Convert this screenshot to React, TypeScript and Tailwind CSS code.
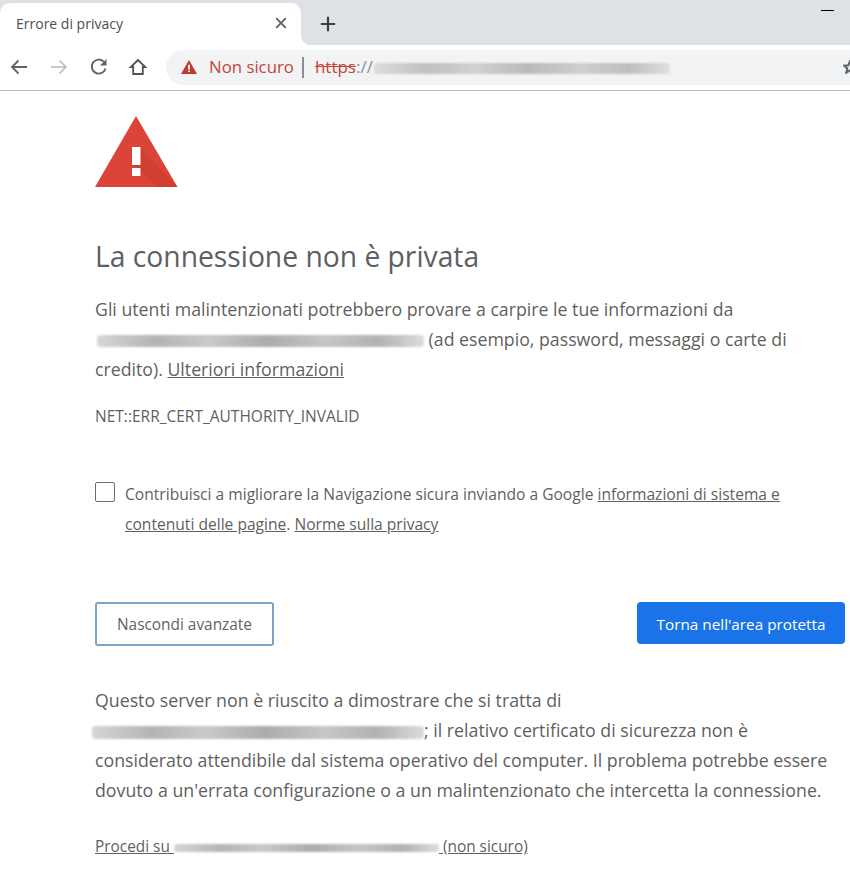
const bodyFont = { fontFamily: '"Open Sans", "Noto Sans", sans-serif' };

function Smudge({ className }: { className: string }) {
  return (
    <span
      className={`inline-block rounded-[3px] bg-[linear-gradient(90deg,#d6d6d6,#b4b4b4_18%,#c9c9c9_34%,#acacac_52%,#c6c6c6_70%,#b2b2b2_86%,#dcdcdc)] blur-[1px] align-middle ${className}`}
    />
  );
}

function TabBar() {
  return (
    <div className="relative flex h-[45px] items-start bg-[#dee1e6] pt-[3px]">
      <div className="relative flex h-[42px] w-[301px] items-center justify-between rounded-t-[10px] bg-white pb-[2px] pl-4 pr-[14px]">
        <span className="text-[14px] text-[#4b4f53]">Errore di privacy</span>
        <svg width="12" height="12" viewBox="0 0 12 12" className="text-[#5f6368]">
          <path d="M1.200 1.200 10.800 10.800M10.800 1.200 1.200 10.800" stroke="currentColor" strokeWidth="1.900" />
        </svg>
        <div className="absolute bottom-0 left-full h-[9px] w-[9px] bg-white">
          <div className="h-full w-full rounded-bl-[9px] bg-[#dee1e6]" />
        </div>
      </div>
      <svg width="16" height="16" viewBox="0 0 16 16" className="ml-[19px] mt-[13px] text-[#3c4043]">
        <path d="M8 .8v14.400M.8 8h14.400" stroke="currentColor" strokeWidth="2.200" />
      </svg>
      <div className="absolute right-[16px] top-[10px] h-px w-[13px] bg-black" />
    </div>
  );
}

function Toolbar() {
  return (
    <div className="flex h-[46px] items-center overflow-hidden border-b border-[#b9b9b9] bg-white pb-[1px]">
      <svg width="18" height="16" viewBox="0 0 18 16" className="ml-[10px] text-[#5f6368]">
        <path d="M17 8H2M8.500 1.500 2 8l6.500 6.500" fill="none" stroke="currentColor" strokeWidth="1.800" />
      </svg>
      <svg width="18" height="16" viewBox="0 0 18 16" className="ml-[22px] text-[#b9bcc0]">
        <path d="M1 8h15M9.500 1.500 16 8l-6.500 6.500" fill="none" stroke="currentColor" strokeWidth="1.600" />
      </svg>
      <svg width="18" height="18" viewBox="0 0 18 18" className="ml-[22px] text-[#5f6368]">
        <path d="M15.500 10.500A7 7 0 1 1 13.900 3.800" fill="none" stroke="currentColor" strokeWidth="1.900" />
        <path d="M16.500 1v6.500H10z" fill="currentColor" />
      </svg>
      <svg width="18" height="18" viewBox="0 0 18 18" className="ml-[21px] text-[#4f5357]">
        <path d="M9 2 1.800 9H4.200v7h9.600V9h2.400z" fill="none" stroke="currentColor" strokeWidth="1.800" strokeLinejoin="miter" />
      </svg>
      <div className="ml-[19px] flex h-[35px] min-w-0 flex-1 items-center rounded-l-full bg-[#f1f3f4] pl-[15px]">
        <svg width="16" height="14" viewBox="0 0 16 14" className="shrink-0">
          <path d="M8 0 16 14H0z" fill="#c5382c" />
          <path d="M7.100 4.800h1.800v4.600H7.100zM7.100 10.400h1.800v1.700H7.100z" fill="#fff" />
        </svg>
        <span className="ml-[12px] text-[16.800px] text-[#c5453a]">Non sicuro</span>
        <span className="ml-[8px] h-[21px] w-[2px] bg-[#8a8e92]" />
        <span className="ml-[11px] text-[17px] text-[#c5453a] line-through">https</span>
        <span className="text-[17px] text-[#8a8d90]">://</span>
        <Smudge className="ml-[1px] mt-[2px] h-[11px] w-[296px] opacity-80" />
        <svg width="14" height="14" viewBox="0 0 14 14" className="ml-auto mr-[-7px] shrink-0 text-[#5f6368]">
          <path d="M7 1.200 8.700 5.200 13 5.600 9.700 8.400 10.700 12.700 7 10.400 3.300 12.700 4.300 8.400 1 5.600 5.300 5.200z" fill="none" stroke="currentColor" strokeWidth="2" />
        </svg>
      </div>
    </div>
  );
}

function WarningIcon() {
  return (
    <svg width="83" height="71" viewBox="0 0 83 71" className="block">
      <path d="M41 0 82.500 71H0z" fill="#db4437" />
      <path d="M45 31 82.500 71H62L37 48z" fill="#c53929" opacity="0.5" />
      <path d="M37 31h8.500v18H37zM37 52h8.500v8H37z" fill="#fff" />
    </svg>
  );
}

export default function App() {
  return (
    <div className="h-[882px] w-[850px] overflow-hidden bg-white" style={bodyFont}>
      <TabBar />
      <Toolbar />
      <main className="pl-[95px] pr-[5px] text-[#5f5f5f]">
        <div className="pt-[25px]">
          <WarningIcon />
        </div>
        <h1 className="mt-[49px] text-[28.250px] leading-[40px] text-[#5c6064]">La connessione non è privata</h1>
        <p className="mt-[18px] w-[730px] text-[17.730px] leading-[30px]">
          Gli utenti malintenzionati potrebbero provare a carpire le tue informazioni da
          <br />
          <Smudge className="ml-[2px] h-[12px] w-[327px]" /> (ad esempio, password, messaggi o carte di
          <br />
          credito). <span className="underline">Ulteriori informazioni</span>
        </p>
        <p className="mt-[22px] text-[15.500px] leading-[20px]">NET::ERR_CERT_AUTHORITY_INVALID</p>

        <div className="mt-[53px] flex items-start">
          <span className="mt-[3px] block h-[20px] w-[20px] shrink-0 rounded-[2px] border border-[#6e6e6e]" />
          <p className="ml-[10px] text-[15.600px] leading-[30px]">
            Contribuisci a migliorare la Navigazione sicura inviando a Google{" "}
            <span className="underline">informazioni di sistema e</span>
            <br />
            <span className="underline">contenuti delle pagine</span>. <span className="underline">Norme sulla privacy</span>
          </p>
        </div>

        <div className="mt-[63px] flex items-start justify-between">
          <button className="h-[44px] w-[179px] rounded-[3px] border-2 border-[#7ea3c4] bg-white pt-[2px] text-[15.400px] text-[#5f6368]">
            Nascondi avanzate
          </button>
          <button className="h-[42px] w-[208px] rounded-[4px] bg-[#1a73e8] pt-[2px] text-[15.300px] font-medium text-white">
            Torna nell'area protetta
          </button>
        </div>

        <p className="mt-[39px] w-[745px] text-[17.750px] leading-[30px]">
          Questo server non è riuscito a dimostrare che si tratta di
          <br />
          <Smudge className="ml-[-3px] h-[13px] w-[332px]" />; il relativo certificato di sicurezza non è
          <br />
          considerato attendibile dal sistema operativo del computer. Il problema potrebbe essere
          <br />
          dovuto a un'errata configurazione o a un malintenzionato che intercetta la connessione.
        </p>
        <p className="mt-[32px] text-[15.400px] leading-[20px] underline">
          Procedi su <Smudge className="h-[8px] w-[265px]" /> (non sicuro)
        </p>
      </main>
    </div>
  );
}
